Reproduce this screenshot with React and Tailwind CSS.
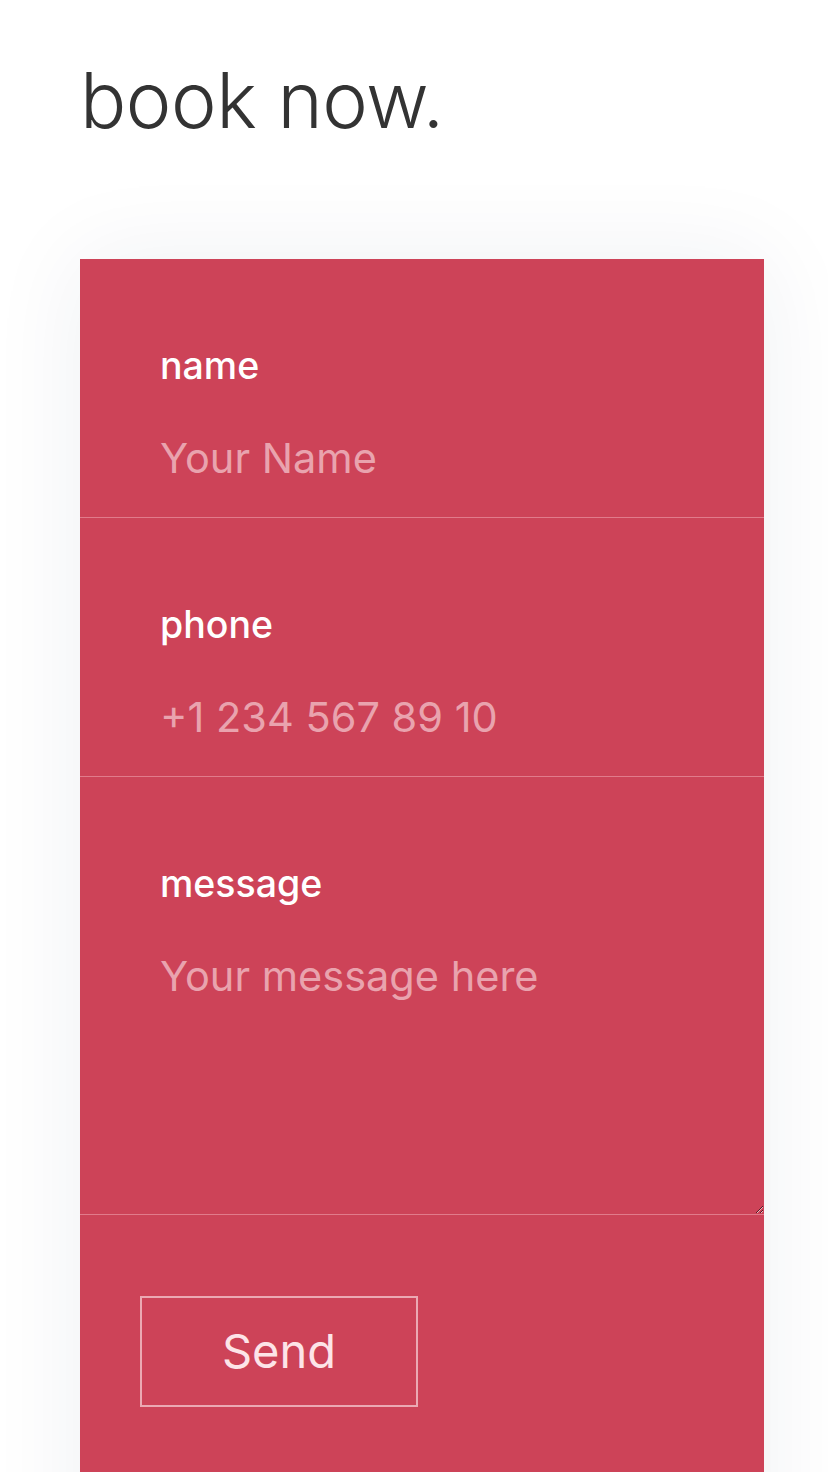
import React from 'react';

const font = { fontFamily: 'Inter, "Noto Sans", sans-serif' };

function Field({ label, placeholder, type = 'text' }) {
  return (
    <div>
      <label className="block px-[80px] pt-[87px] h-[127px] text-[37.5px] leading-[40px] font-medium text-white">
        {label}
      </label>
      <input
        type={type}
        placeholder={placeholder}
        className="block w-full h-[132px] px-[80px] pt-[42px] pb-[30px] bg-transparent text-[41.5px] leading-[60px] text-white placeholder:text-[#e9a3ae] border-b border-[#e17b8b] outline-none"
      />
    </div>
  );
}

export default function App() {
  return (
    <div className="min-h-[1472px] bg-white overflow-hidden" style={font}>
      <h1 className="pl-[80px] pt-[54px] text-[77px] leading-[92px] font-light text-[#333333] tracking-[-0.5px]">
        book now.
      </h1>

      <form
        className="mt-[113px] ml-[80px] w-[684px] bg-[#cd4358] shadow-[0_0_90px_rgba(30,40,80,0.07)] pb-[200px]"
        onSubmit={(e) => e.preventDefault()}
      >
        <Field label="name" placeholder="Your Name" />
        <Field label="phone" placeholder="+1 234 567 89 10" type="tel" />
        <div>
          <label className="block px-[80px] pt-[87px] h-[127px] text-[37.5px] leading-[40px] font-medium text-white">
            message
          </label>
          <textarea
            placeholder="Your message here"
            className="block w-full h-[311px] px-[80px] pt-[42px] bg-transparent text-[41.5px] leading-[60px] text-white placeholder:text-[#e9a3ae] border-b border-[#e17b8b] outline-none resize-y"
          />
        </div>
        <div className="px-[60px] pt-[81px]">
          <button
            type="submit"
            className="w-[278px] h-[111px] border-2 border-[#eba9b3] text-[47px] text-[#fde4e8] font-normal"
          >
            Send
          </button>
        </div>
      </form>
    </div>
  );
}
